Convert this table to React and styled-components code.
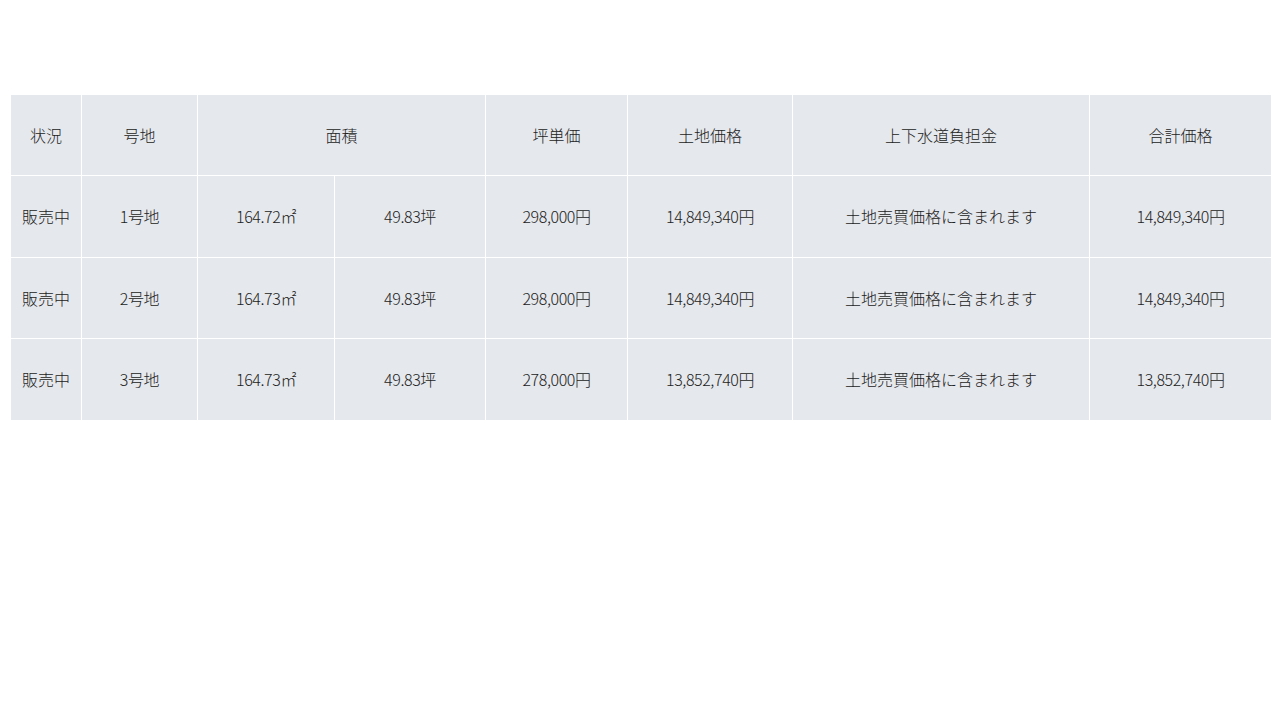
import React from "react";
import styled, { createGlobalStyle } from "styled-components";

const Global = createGlobalStyle`
  html, body { margin: 0; padding: 0; background: #fff; }
  body { font-family: "Noto Sans CJK JP", "Noto Sans", sans-serif; color: #222; }
`;

const Page = styled.div`
  padding: 94px 9px 0 10px;
`;

const Table = styled.table`
  width: 1261px;
  table-layout: fixed;
  border-collapse: collapse;
  font-size: 16px;
  line-height: 1.4;
`;

const Cell = styled.td`
  background: #e5e8ec;
  border: 1px solid #fff;
  height: ${(p) => (p.$head ? 80 : 80.5)}px;
  padding: 0;
  text-align: center;
  vertical-align: middle;
  font-weight: 300;
  color: #222;
  white-space: nowrap;
  letter-spacing: ${(p) => (p.$num ? "-0.4px" : "0")};
`;

const widths = [71, 116, 137, 151, 142, 165, 297, 182];

const rows = [
  ["販売中", "1号地", "164.72㎡", "49.83坪", "298,000円", "14,849,340円", "土地売買価格に含まれます", "14,849,340円"],
  ["販売中", "2号地", "164.73㎡", "49.83坪", "298,000円", "14,849,340円", "土地売買価格に含まれます", "14,849,340円"],
  ["販売中", "3号地", "164.73㎡", "49.83坪", "278,000円", "13,852,740円", "土地売買価格に含まれます", "13,852,740円"],
];

const isNum = (s) => /^[0-9]/.test(s);

export default function App() {
  return (
    <>
      <Global />
      <Page>
        <Table>
          <colgroup>
            {widths.map((w, i) => (
              <col key={i} style={{ width: w }} />
            ))}
          </colgroup>
          <thead>
            <tr>
              <Cell as="th" $head>状況</Cell>
              <Cell as="th" $head>号地</Cell>
              <Cell as="th" $head colSpan={2}>面積</Cell>
              <Cell as="th" $head>坪単価</Cell>
              <Cell as="th" $head>土地価格</Cell>
              <Cell as="th" $head>上下水道負担金</Cell>
              <Cell as="th" $head>合計価格</Cell>
            </tr>
          </thead>
          <tbody>
            {rows.map((r, i) => (
              <tr key={i}>
                {r.map((c, j) => (
                  <Cell key={j} $num={isNum(c)}>{c}</Cell>
                ))}
              </tr>
            ))}
          </tbody>
        </Table>
      </Page>
    </>
  );
}
